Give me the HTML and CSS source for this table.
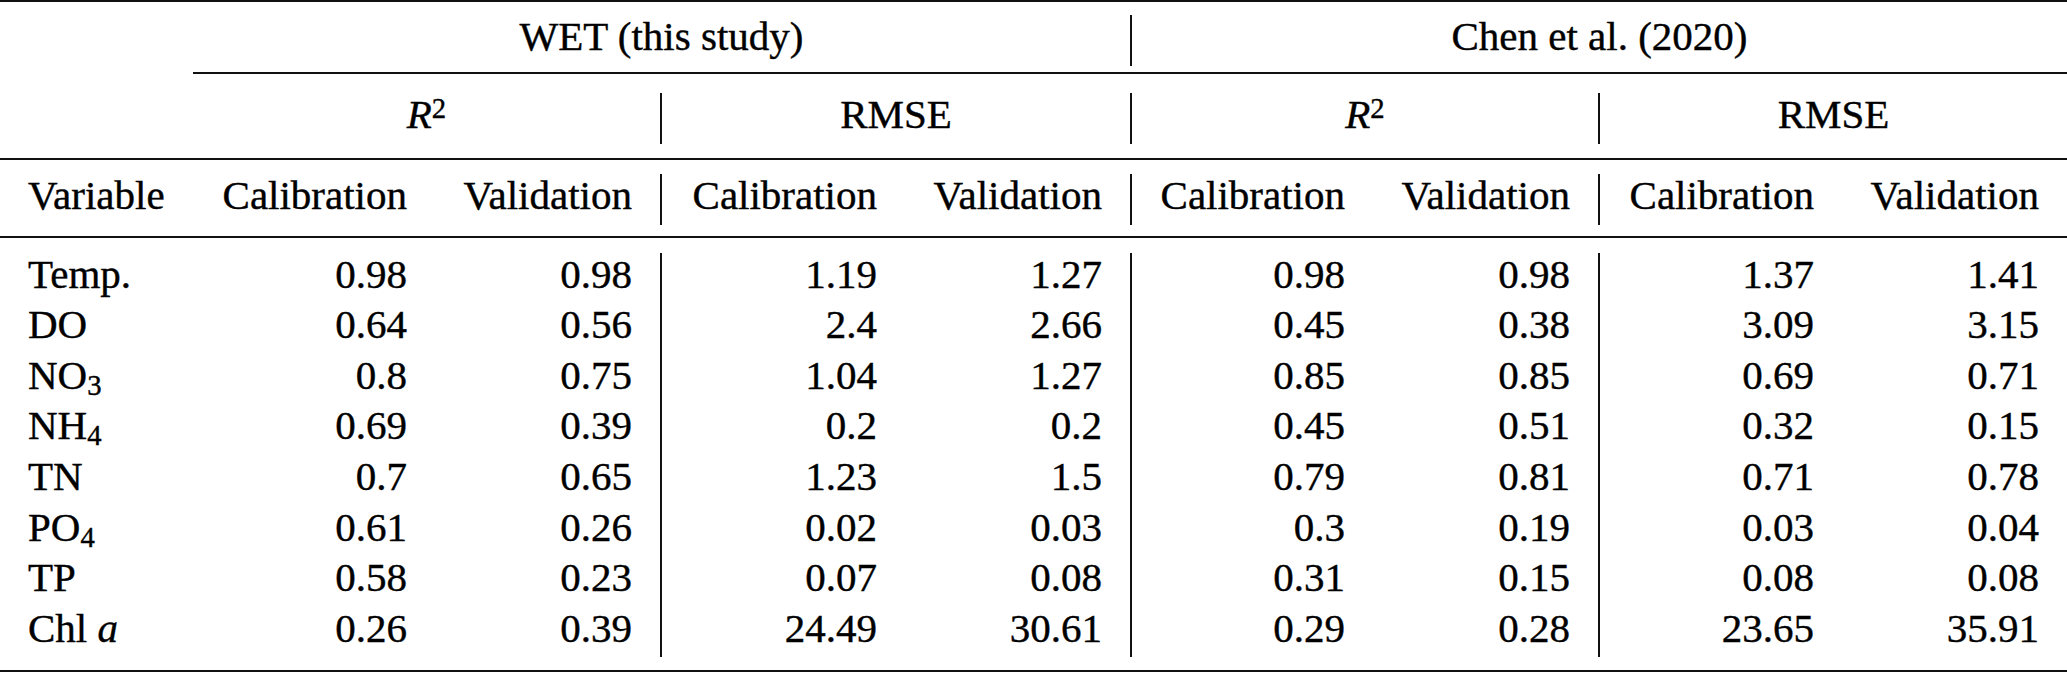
FILE: index.html
```html
<!DOCTYPE html>
<html lang="en">
<head>
<meta charset="utf-8">
<title>Model performance comparison</title>
<link rel="stylesheet" href="styles.css">
</head>
<body>
<div class="table">
  <div class="rule rule-top"></div>

  <div class="grid head head1">
    <div class="cell"></div>
    <div class="cell span4">WET (this study)</div>
    <div class="cell span4 sep">Chen et al. (2020)</div>
  </div>

  <div class="rule rule-cmid"></div>

  <div class="grid head head2">
    <div class="cell"></div>
    <div class="cell span2"><i>R</i><sup>2</sup></div>
    <div class="cell span2 sep">RMSE</div>
    <div class="cell span2 sep"><i>R</i><sup>2</sup></div>
    <div class="cell span2 sep">RMSE</div>
  </div>

  <div class="rule rule-mid1"></div>

  <div class="grid head3">
    <div class="cell var">Variable</div>
    <div class="cell num">Calibration</div>
    <div class="cell num">Validation</div>
    <div class="cell num sep">Calibration</div>
    <div class="cell num">Validation</div>
    <div class="cell num sep">Calibration</div>
    <div class="cell num">Validation</div>
    <div class="cell num sep">Calibration</div>
    <div class="cell num">Validation</div>
  </div>

  <div class="rule rule-mid2"></div>

  <div class="grid body">
    <div class="cell var">Temp.</div>
    <div class="cell num">0.98</div><div class="cell num">0.98</div>
    <div class="cell num sep">1.19</div><div class="cell num">1.27</div>
    <div class="cell num sep">0.98</div><div class="cell num">0.98</div>
    <div class="cell num sep">1.37</div><div class="cell num">1.41</div>

    <div class="cell var">DO</div>
    <div class="cell num">0.64</div><div class="cell num">0.56</div>
    <div class="cell num sep">2.4</div><div class="cell num">2.66</div>
    <div class="cell num sep">0.45</div><div class="cell num">0.38</div>
    <div class="cell num sep">3.09</div><div class="cell num">3.15</div>

    <div class="cell var">NO<sub>3</sub></div>
    <div class="cell num">0.8</div><div class="cell num">0.75</div>
    <div class="cell num sep">1.04</div><div class="cell num">1.27</div>
    <div class="cell num sep">0.85</div><div class="cell num">0.85</div>
    <div class="cell num sep">0.69</div><div class="cell num">0.71</div>

    <div class="cell var">NH<sub>4</sub></div>
    <div class="cell num">0.69</div><div class="cell num">0.39</div>
    <div class="cell num sep">0.2</div><div class="cell num">0.2</div>
    <div class="cell num sep">0.45</div><div class="cell num">0.51</div>
    <div class="cell num sep">0.32</div><div class="cell num">0.15</div>

    <div class="cell var">TN</div>
    <div class="cell num">0.7</div><div class="cell num">0.65</div>
    <div class="cell num sep">1.23</div><div class="cell num">1.5</div>
    <div class="cell num sep">0.79</div><div class="cell num">0.81</div>
    <div class="cell num sep">0.71</div><div class="cell num">0.78</div>

    <div class="cell var">PO<sub>4</sub></div>
    <div class="cell num">0.61</div><div class="cell num">0.26</div>
    <div class="cell num sep">0.02</div><div class="cell num">0.03</div>
    <div class="cell num sep">0.3</div><div class="cell num">0.19</div>
    <div class="cell num sep">0.03</div><div class="cell num">0.04</div>

    <div class="cell var">TP</div>
    <div class="cell num">0.58</div><div class="cell num">0.23</div>
    <div class="cell num sep">0.07</div><div class="cell num">0.08</div>
    <div class="cell num sep">0.31</div><div class="cell num">0.15</div>
    <div class="cell num sep">0.08</div><div class="cell num">0.08</div>

    <div class="cell var">Chl <i>a</i></div>
    <div class="cell num">0.26</div><div class="cell num">0.39</div>
    <div class="cell num sep">24.49</div><div class="cell num">30.61</div>
    <div class="cell num sep">0.29</div><div class="cell num">0.28</div>
    <div class="cell num sep">23.65</div><div class="cell num">35.91</div>
  </div>

  <div class="rule rule-bottom"></div>
</div>
</body>
</html>
```

FILE: styles.css
```css
html, body {
  margin: 0;
  padding: 0;
  background: #ffffff;
}

body {
  width: 2067px;
  height: 673px;
  overflow: hidden;
  font-family: "Liberation Serif", "Times New Roman", serif;
  font-size: 41px;
  color: #000000;
  font-kerning: normal;
  -webkit-text-stroke: 0.4px #000000;
}

.table {
  display: flex;
  flex-direction: column;
  width: 2067px;
}

.rule {
  height: 2px;
  background: #111111;
  flex: none;
}

.rule-top { margin-top: 0; }
.rule-cmid { margin-top: 6.4px; margin-left: 193px; }
.rule-mid1 { margin-top: 14px; }
.rule-mid2 { margin-top: 11.4px; }
.rule-bottom { margin-top: 12.6px; }

.grid {
  display: grid;
  grid-template-columns: 193px 242px 225px 245px 225px 243px 225px 244px 225px;
  grid-auto-rows: 50.6px;
  flex: none;
}

.head1 { margin-top: 13px; }
.head2 { margin-top: 19.4px; }
.head3 { margin-top: 14px; }
.body { margin-top: 14.6px; }

.cell {
  box-sizing: border-box;
  line-height: 43px;
  white-space: nowrap;
  padding: 0 28px;
}

.head .cell {
  text-align: center;
  padding: 0;
}

.span2 { grid-column: span 2; }
.span4 { grid-column: span 4; }

.sep {
  border-left: 2px solid #111111;
}

.var {
  text-align: left;
}

.num {
  text-align: right;
}

sub {
  font-size: 0.7em;
  line-height: 0;
  vertical-align: -0.22em;
}

sup {
  font-size: 0.7em;
  line-height: 0;
  vertical-align: 0.36em;
}
```
